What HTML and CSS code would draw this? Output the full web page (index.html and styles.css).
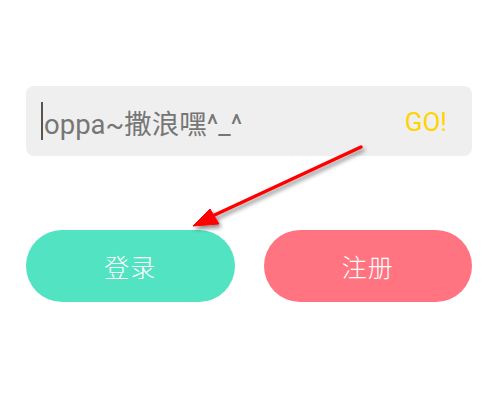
FILE: index.html
```html
<!DOCTYPE html>
<html lang="zh">
<head>
    <meta charset="UTF-8">
    <meta name="viewport" content="width=device-width, initial-scale=1.0">
    <title>Login</title>
    <link rel="stylesheet" href="styles.css">
</head>
<body>
    <div class="page">
        <div class="input-box">
            <span class="cursor"></span>
            <span class="input-text">oppa~撒浪嘿^_^</span>
            <span class="go">GO!</span>
        </div>

        <div class="btn-row">
            <button class="btn btn-login">登录</button>
            <button class="btn btn-register">注册</button>
        </div>

        <!-- annotation arrow drawn over the page -->
        <svg class="arrow" width="496" height="414" viewBox="0 0 496 414">
            <defs>
                <filter id="shadow" x="-20%" y="-20%" width="140%" height="140%">
                    <feDropShadow dx="2" dy="3" stdDeviation="2" flood-color="#000" flood-opacity="0.45"/>
                </filter>
            </defs>
            <g filter="url(#shadow)" fill="#ff0000" stroke="#ff0000">
                <line x1="361" y1="147" x2="206" y2="219" stroke-width="3.5" stroke-linecap="round"/>
                <polygon points="193,226 210,209 219,224" stroke-width="1" stroke-linejoin="round"/>
            </g>
        </svg>
    </div>
</body>
</html>
```

FILE: styles.css
```css
body {
    margin: 0;
    background: #ffffff;
    font-family: Roboto, "Noto Sans CJK SC", sans-serif;
}
.page {
    position: relative;
    width: 496px;
    height: 414px;
    padding: 86px 24px 0 26px;
    box-sizing: border-box;
}
.input-box {
    display: flex;
    align-items: center;
    height: 70px;
    background: #efefef;
    border-radius: 8px;
    padding: 0 25px 0 15px;
}
.cursor {
    width: 2px;
    height: 38px;
    background: #555;
    margin-right: 1px;
}
.input-text {
    flex: 1;
    font-size: 27.5px;
    color: #767676;
    padding-top: 2px;
}
.go {
    font-size: 26px;
    color: #ffd400;
    padding-top: 2px;
}
.btn-row {
    display: flex;
    gap: 29px;
    margin-top: 74px;
}
.btn {
    flex: 1;
    height: 72px;
    border: none;
    border-radius: 36px;
    color: white;
    font-size: 25px;
    font-family: "Noto Sans CJK SC", sans-serif;
    font-weight: 300;
    letter-spacing: 1px;
}
.btn-login {
    background: #52e3c2;
}
.btn-register {
    background: #ff7480;
}
.arrow {
    position: absolute;
    left: 0;
    top: 0;
}
```
